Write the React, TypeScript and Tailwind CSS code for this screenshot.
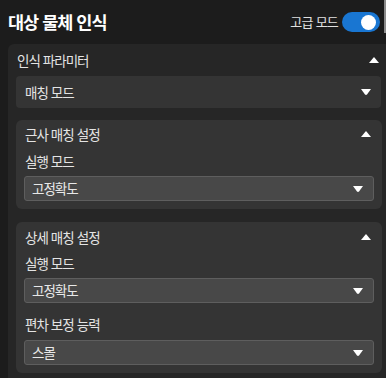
import React from 'react';

const font = { fontFamily: '"Noto Sans CJK KR", "Noto Sans", sans-serif' };

const TriUp = ({ className = '' }: { className?: string }) => (
  <svg width="10" height="6" viewBox="0 0 10 6" className={className}>
    <polygon points="5,0 10,6 0,6" fill="#ffffff" />
  </svg>
);

const TriDown = ({ className = '' }: { className?: string }) => (
  <svg width="10" height="6" viewBox="0 0 10 6" className={className}>
    <path d="M0 0 H10 L6 5.5 Q5 6.3 4 5.5 Z" fill="#ffffff" />
  </svg>
);

const Select = ({ value }: { value: string }) => (
  <div className="flex h-[25px] items-center justify-between rounded-[3px] border border-[#5e5e5e] bg-[#484848] pl-[7px] pr-[10px]">
    <span className="text-[13.5px] tracking-[-1px] text-[#e8e8e8]">{value}</span>
    <TriDown />
  </div>
);

const Label = ({ text, className = '' }: { text: string; className?: string }) => (
  <div className={`flex h-[22px] items-center pl-px text-[13.5px] tracking-[-1px] [word-spacing:1px] text-[#e4e4e4] ${className}`}>{text}</div>
);

const CardHeader = ({ title, className = '' }: { title: string; className?: string }) => (
  <div className={`flex items-center justify-between pl-[9px] pr-[11px] ${className}`}>
    <span className="text-[13.5px] tracking-[-1px] [word-spacing:1px] text-[#e4e4e4]">{title}</span>
    <TriUp />
  </div>
);

export default function App() {
  return (
    <div className="relative h-[378px] w-[386px] overflow-hidden bg-[#1c1c1c]" style={font}>
      <div className="absolute right-0 top-0 h-[33px] w-[2px] bg-[#8a8a8a]" />

      <div className="flex h-11 items-center justify-between pl-2 pr-[6px]">
        <h1 className="text-[17.5px] font-bold tracking-[-1px] [word-spacing:1px] text-white">대상 물체 인식</h1>
        <div className="flex items-center gap-1">
          <span className="text-[13px] tracking-[-0.8px] [word-spacing:1px] text-[#e0e0e0]">고급 모드</span>
          <div className="flex h-5 w-[38px] items-center justify-end rounded-full bg-[#1976d2] pr-[4px]">
            <div className="h-[15px] w-[15px] rounded-full bg-white" />
          </div>
        </div>
      </div>

      <div className="ml-2 h-[340px] rounded-tl-md bg-[#262626]">
        <div className="flex h-8 items-center justify-between pl-[9px] pr-[7px]">
          <span className="text-[13.5px] tracking-[-1px] [word-spacing:1px] text-[#e4e4e4]">인식 파라미터</span>
          <TriUp />
        </div>

        <div className="flex flex-col pl-2 pr-[5px]">
          <div className="flex h-8 items-center justify-between rounded bg-[#343434] pl-[9px] pr-[10px]">
            <span className="text-[13.5px] tracking-[-1px] [word-spacing:1px] text-[#e4e4e4]">매칭 모드</span>
            <TriDown />
          </div>

          <div className="mt-3 mr-[-1px] rounded-md bg-[#343434] pb-2">
            <CardHeader title="근사 매칭 설정" className="h-7" />
            <div className="px-2">
              <Label text="실행 모드" className="mt-[2px]" />
              <div className="mt-1">
                <Select value="고정확도" />
              </div>
            </div>
          </div>

          <div className="mt-[13px] mr-[-1px] rounded-md bg-[#343434] pb-2">
            <CardHeader title="상세 매칭 설정" className="h-[30px]" />
            <div className="px-2">
              <Label text="실행 모드" />
              <div className="mt-1">
                <Select value="고정확도" />
              </div>
              <Label text="편차 보정 능력" className="mt-[10px]" />
              <div className="mt-[5px]">
                <Select value="스몰" />
              </div>
            </div>
          </div>
        </div>
      </div>
    </div>
  );
}
